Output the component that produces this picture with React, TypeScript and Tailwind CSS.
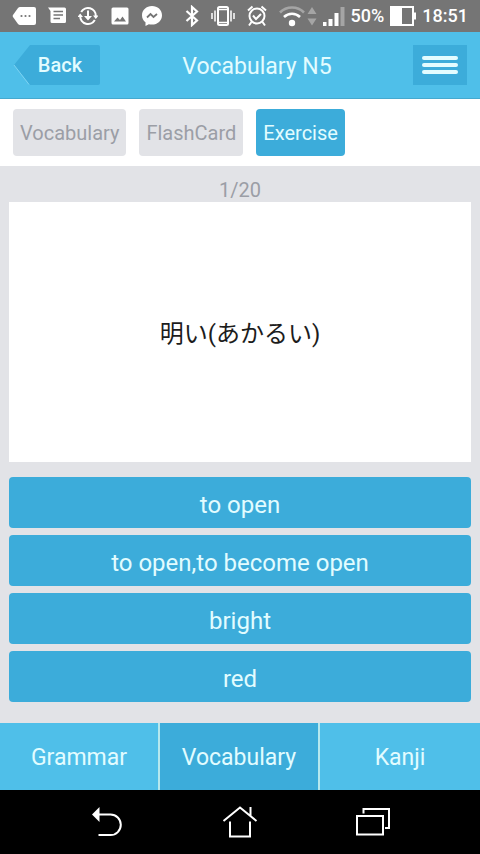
import React, { useState } from 'react';

const tabs = ['Vocabulary', 'FlashCard', 'Exercise'];
const answers = ['to open', 'to open,to become open', 'bright', 'red'];
const sections = ['Grammar', 'Vocabulary', 'Kanji'];

function StatusBar() {
    return (
        <div className="flex h-8 items-center justify-between bg-[#757575] px-3 text-white">
            <div className="flex items-center gap-3">
                {/* Tag with dots */}
                <svg width="24" height="20" viewBox="0 0 24 20">
                    <path fill="#fff" d="M8 1h14q2 0 2 2v14q0 2-2 2H8q-1 0-2-1L1 11q-.7-1 0-2l5-7q1-1 2-1z" />
                    <g fill="#757575">
                        <circle cx="9.500" cy="10" r="1.100" />
                        <circle cx="13.500" cy="10" r="1.100" />
                        <circle cx="17.500" cy="10" r="1.100" />
                    </g>
                </svg>
                {/* Message */}
                <svg width="18" height="20" viewBox="0 0 18 20">
                    <path fill="#fff" d="M0 1.500h16.500q1.500 0 1.500 1.500v12.500q0 1.500-1.500 1.500H4q-1.500 0-1.500-1.500V5z" />
                    <path stroke="#757575" strokeWidth="1.600" d="M5.500 5.500h9.500M5.500 9h9.500M5.500 12.500h6.500" />
                </svg>
                {/* Sync download */}
                <svg width="20" height="20" viewBox="0 0 20 20" fill="none" stroke="#fff">
                    <path strokeWidth="2" d="M3.200 6A7.800 7.800 0 0 1 17.800 10M16.800 14A7.800 7.800 0 0 1 2.200 10" />
                    <path strokeWidth="2" d="M10 4.500v7" />
                    <path fill="#fff" stroke="none" d="M6 10h8l-4 4.500zM-.5 11h5.500L2.200 7.500zM20.500 9.500h-5.500l2.800 3.500z" />
                </svg>
                {/* Picture */}
                <svg width="20" height="20" viewBox="0 0 20 20">
                    <rect x="1.500" y="1.500" width="17" height="17" rx="1.500" fill="#fff" />
                    <path fill="#757575" d="M4 15.500l3.500-4 2.500 2.500 2.500-3.500 3.500 5z" />
                </svg>
                {/* Messenger */}
                <svg width="20" height="20" viewBox="0 0 20 20">
                    <path fill="#fff" d="M10 0C4.400 0 0 4 0 9.200c0 3 1.300 5.400 3.500 7V20l3.300-1.800c1 .3 2.100.4 3.200.4 5.600 0 10-4.100 10-9.400S15.600 0 10 0z" />
                    <path fill="none" stroke="#757575" strokeWidth="1.800" d="M5 11.500l3.500-3.500 3 3 3.500-3" />
                </svg>
            </div>
            <div className="flex items-center gap-3">
                {/* Bluetooth */}
                <svg width="14" height="22" viewBox="0 0 14 22" fill="none" stroke="#fff" strokeWidth="2.200">
                    <path d="M1.500 6L12 15.500l-5 4.500V2l5 4.500L1.500 16" />
                </svg>
                {/* Vibrate */}
                <svg width="24" height="20" viewBox="0 0 24 20" fill="none" stroke="#fff">
                    <rect x="7" y="1" width="10" height="18" rx="1.500" strokeWidth="2" />
                    <path strokeWidth="1.500" d="M7 3.500h10M7 16.500h10" />
                    <path strokeWidth="1.500" d="M4 4.500v11M20 4.500v11M1 7v6M23 7v6" />
                </svg>
                {/* Alarm */}
                <svg width="20" height="22" viewBox="0 0 20 22" fill="none" stroke="#fff" strokeWidth="2">
                    <circle cx="10" cy="11" r="7.500" />
                    <path d="M1 5.500l4.500-4M19 5.500l-4.500-4M4.500 17L2 20.500M15.500 17l2.500 3.500M6 10.500l3 3.500 5-5" />
                </svg>
                <div className="flex items-center gap-1.5">
                    {/* Wifi and data arrows */}
                    <svg width="38" height="22" viewBox="0 0 38 22">
                        <g fill="none" strokeWidth="2.600">
                            <path stroke="#a5a5a5" d="M1 7.500a17 17 0 0 1 24 0" />
                            <path stroke="#fff" d="M5 12a11.500 11.500 0 0 1 16 0" />
                        </g>
                        <circle cx="13" cy="18" r="3.200" fill="#fff" />
                        <path fill="#a5a5a5" d="M28.500 9l4.500-7 4.500 7zM28.500 13.500h9l-4.500 7z" />
                    </svg>
                    {/* Signal */}
                    <svg width="22" height="20" viewBox="0 0 22 20">
                        <path fill="#fff" d="M0 16h3.500v4H0zM5.500 13h4v7h-4zM11.500 7h4v13h-4z" />
                        <path fill="#a5a5a5" d="M17.500 1h4v19h-4z" />
                    </svg>
                    <span className="text-lg leading-5 font-medium">50%</span>
                    {/* Battery */}
                    <svg width="26" height="20" viewBox="0 0 26 20">
                        <path fill="none" stroke="#fff" strokeWidth="2" d="M1 1h22v18H1z" />
                        <path fill="#fff" d="M1 1h11v18H1zM24 6.500h2v7h-2z" />
                    </svg>
                    <span className="text-lg leading-5 font-medium">18:51</span>
                </div>
            </div>
        </div>
    );
}

function SystemNav() {
    return (
        <div className="flex h-16 items-center justify-center gap-24 bg-black">
            <button aria-label="Back">
                <svg width="36" height="36" viewBox="0 0 36 36">
                    <path fill="none" stroke="#fff" strokeWidth="2" d="M8 10.500h12.500a10.300 10.300 0 0 1 0 20.600H8.500" />
                    <path fill="#fff" d="M2 10.500L9.500 3v15z" />
                </svg>
            </button>
            <button aria-label="Home">
                <svg width="36" height="36" viewBox="0 0 36 36" fill="none" stroke="#fff" strokeWidth="2">
                    <path d="M1.500 17L18 3.500 34.500 17M28.500 11.500V3" />
                    <path d="M8 17.500v15h20v-15" />
                </svg>
            </button>
            <button aria-label="Recent apps">
                <svg width="36" height="36" viewBox="0 0 36 36" fill="none" stroke="#fff" strokeWidth="2">
                    <path d="M3 12h26v18.500H3z" />
                    <path d="M9.500 9.500V5H35v19h-4" />
                </svg>
            </button>
        </div>
    );
}

export default function App() {
    const [tab, setTab] = useState('Exercise');
    const [section, setSection] = useState('Vocabulary');

    return (
        <div className="flex min-h-screen flex-col bg-[#e2e3e7] font-['Roboto','Noto_Sans_CJK_JP',sans-serif]">
            <StatusBar />

            <header className="flex h-[67px] items-center justify-between border-b border-[#45a9cf] bg-[#4fbfe9] px-[13px] text-[#e2fcff]">
                <button className="relative h-10 w-[88px] pl-1.5 text-xl leading-10 font-medium">
                    <svg className="absolute inset-0" width="88" height="40" viewBox="0 0 88 40">
                        <path fill="#3cacda" d="M17 0h68q2 0 2 2v36q0 2-2 2H17L1 20z" />
                        <path fill="none" stroke="#7ed3f2" d="M1 20l15 19.500" />
                    </svg>
                    <span className="relative">Back</span>
                </button>
                <h1 className="pt-1 text-[23px]">Vocabulary N5</h1>
                <button aria-label="Menu" className="flex h-10 w-[54px] flex-col items-center justify-center gap-[3px] bg-[#3cacda]">
                    <span className="h-1 w-9 rounded-full bg-[#e2fcff]" />
                    <span className="h-1 w-9 rounded-full bg-[#e2fcff]" />
                    <span className="h-1 w-9 rounded-full bg-[#e2fcff]" />
                </button>
            </header>

            <nav className="flex gap-[13px] bg-white px-[13px] py-[10px]">
                {tabs.map((name) => (
                    <button
                        key={name}
                        onClick={() => setTab(name)}
                        className={
                            name === tab
                                ? 'h-[47px] rounded bg-[#3cacda] px-[7px] text-xl text-[#e2fcff]'
                                : 'h-[47px] rounded bg-[#e2e3e7] px-[7px] text-xl text-[#9b9ea6]'
                        }
                    >
                        {name}
                    </button>
                ))}
            </nav>

            <main className="flex flex-1 flex-col px-[9px] pt-3 pb-[21px]">
                <p className="text-center text-xl leading-6 text-[#9b9ea6]">1/20</p>
                <div className="flex min-h-[260px] flex-1 items-center justify-center bg-white pt-1 text-2xl text-[#1c1c1c]">
                    <p lang="ja">明い(あかるい)</p>
                </div>
                <div className="mt-[15px] flex flex-col gap-[7px]">
                    {answers.map((answer) => (
                        <button key={answer} className="h-[51px] rounded bg-[#3cacda] pt-1 text-2xl text-[#e2fcff]">
                            {answer}
                        </button>
                    ))}
                </div>
            </main>

            <nav className="grid h-[67px] grid-cols-3 divide-x-2 divide-[#b5e8ee]">
                {sections.map((name) => (
                    <button
                        key={name}
                        onClick={() => setSection(name)}
                        className={
                            name === section
                                ? 'bg-[#3cacda] pt-1 text-[23px] text-[#e2fcff]'
                                : 'bg-[#4fbfe9] pt-1 text-[23px] text-[#e2fcff]'
                        }
                    >
                        {name}
                    </button>
                ))}
            </nav>

            <SystemNav />
        </div>
    );
}
